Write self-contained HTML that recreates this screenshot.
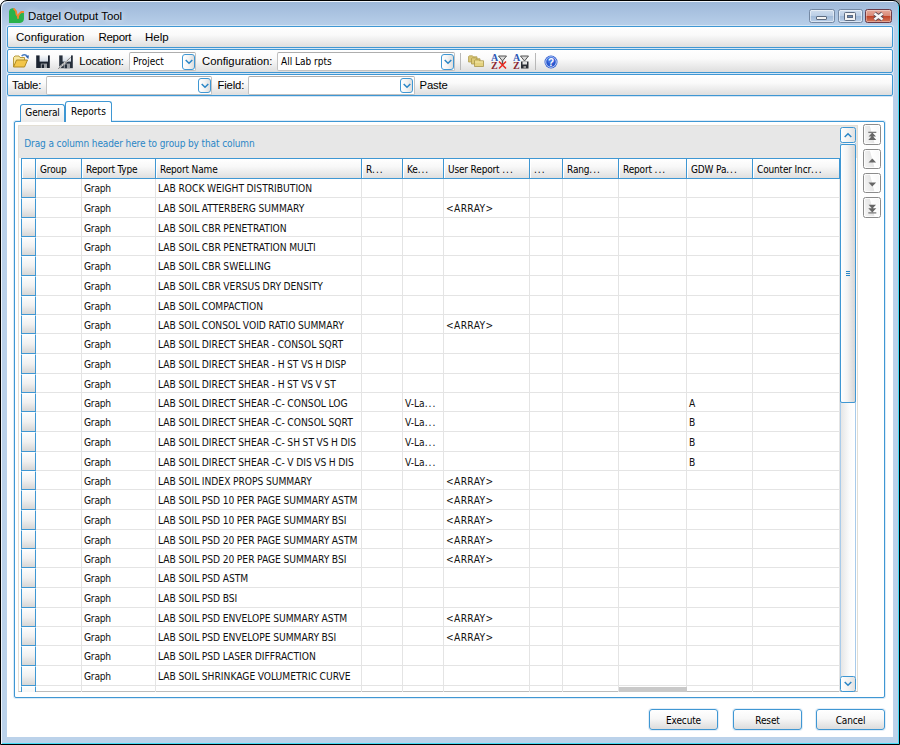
<!DOCTYPE html>
<html lang="en">
<head>
<meta charset="utf-8">
<title>Datgel Output Tool</title>
<style>
*{box-sizing:border-box;margin:0;padding:0}
html,body{width:900px;height:745px;overflow:hidden;background:#fff}
body{position:relative;font-family:"Liberation Sans",sans-serif;font-size:11.5px;color:#000}
i{font-style:normal;display:block;position:absolute}
.abs{position:absolute}
#win{position:absolute;left:0;top:0;width:900px;height:745px;border:1px solid #000;border-radius:7px 7px 0 0;
 background:linear-gradient(#9db8d9 0,#a6bfde 8px,#b9d0ea 26px,#bbd2ea 100%);
 box-shadow:inset 1px 1px 0 #eef4fb,inset -1px -1px 0 #46dcf6}
#client{position:absolute;left:7px;top:26px;width:886px;height:711px;background:#fff}
.title{position:absolute;left:28px;top:8px;height:16px;line-height:16px;font-size:11.4px;white-space:nowrap;
 text-shadow:0 0 7px rgba(255,255,255,.8),0 0 7px rgba(255,255,255,.6)}
/* caption buttons */
.cb{position:absolute;top:9px;height:14px;border:1px solid #7488a3;border-radius:2.5px;background:linear-gradient(#cfdded 0,#bccfe6 46%,#a2bbd9 54%,#b9cde6 100%);box-shadow:inset 0 0 0 1px rgba(255,255,255,.5)}
.cb.close{background:linear-gradient(#e6a99b 0,#d98b79 46%,#c2452a 54%,#d27a5e 100%);border-color:#6b3a48;box-shadow:inset 0 0 0 1px rgba(255,255,255,.35)}
/* bars */
.bar{position:absolute;left:7px;width:886px;border:1px solid #3f97d3;border-radius:2px;
 background:linear-gradient(#ffffff 0,#fafafa 40%,#dedede 100%);box-shadow:0 0 0 1px #d5e6f5}
.lbl{position:absolute;white-space:nowrap;height:16px;line-height:16px;font-size:11.3px;letter-spacing:-.15px}
.combo{position:absolute;height:19px;background:#fff;border:1px solid #c2c2c2;border-top-color:#aeaeae;border-radius:2px}
.combo span{position:absolute;left:3px;top:2px;font:10px/13px "DejaVu Sans Condensed","Liberation Sans",sans-serif;white-space:nowrap}
.dd{position:absolute;width:12.5px;height:16px;border:1px solid #3f97d3;border-radius:3px;background:linear-gradient(90deg,#fff 0,#f4f4f4 50%,#dedede 100%)}
.dd svg{position:absolute;left:2px;top:4px}
.sep{position:absolute;width:1px;background:#b8b8b8}
/* tabs */
.tab{position:absolute;border:1px solid #3f97d3;border-bottom:none;border-radius:3px 3px 0 0;background:linear-gradient(#fff,#ececec);
 font:10px/14px "DejaVu Sans Condensed","Liberation Sans",sans-serif;text-align:center;white-space:nowrap}
.tab.act{background:#fff}
#page{position:absolute;left:14px;top:121px;width:871px;height:577px;border:1px solid #3f97d3;border-radius:2px;background:#fff;box-shadow:0 0 0 1px #dcebf7}
/* grid */
#grid{position:absolute;left:18px;top:125px;width:840px;height:567px;background:#fff;border:1px solid #e2ded4;border-bottom-color:#bcbcbc;overflow:hidden}
#gp{position:absolute;left:19px;top:126px;width:838px;height:32px;background:#e7e7e7}
.gptxt{position:absolute;left:24.3px;top:137px;letter-spacing:-.11px;font:10px/14px "DejaVu Sans Condensed","Liberation Sans",sans-serif;color:#2a86c6;white-space:nowrap}
.hc{position:absolute;top:158px;height:21px;border-top:1px solid #3f97d3;border-bottom:1px solid #3f97d3;border-left:1px solid #3f97d3;background:linear-gradient(#ffffff 0,#f8f8f8 40%,#dfdfdf 100%);box-shadow:inset 1px 1px 0 #fff;font:10px/17px "DejaVu Sans Condensed","Liberation Sans",sans-serif;letter-spacing:-.15px;white-space:nowrap;overflow:hidden}
b.d{font-weight:normal;letter-spacing:1px}
.hc span{position:absolute;left:4px;top:2px}
#gb{position:absolute;left:0;top:0;width:900px;height:745px;clip-path:inset(179px 60px 53px 21px)}
.row{position:absolute;left:0;width:900px;border-bottom:1px solid #e4e4e4}
.row .c{position:absolute;top:4px;font:10.2px/14px "DejaVu Sans Condensed","Liberation Sans",sans-serif;word-spacing:-.4px;white-space:nowrap;color:#111}
.row .nm{width:202px;overflow:hidden}
.row .sel{left:21px;top:0;width:15px;height:calc(100% + 1px);background:linear-gradient(#fdfdfd 0,#f0f0f0 50%,#d6d6d6 100%);border-left:1px solid #3f97d3;border-right:1px solid #3f97d3;border-bottom:1px solid #3f97d3;border-top:1px solid #fff}
.vl{top:179px;width:1px;height:513px;background:#e4e4e4}
/* scroll */
.sbtn{position:absolute;left:840px;width:16px;height:16px;border:1px solid #3f97d3;border-radius:2.5px;background:linear-gradient(90deg,#fff,#f0f0f0 60%,#e0e0e0)}
.track{position:absolute;left:840px;top:143px;width:16px;height:534px;border-left:1px solid #a9cbea;border-right:1px solid #a9cbea;background:linear-gradient(90deg,#e6e6e6,#fbfbfb 60%,#fff)}
.thumb{position:absolute;left:840px;top:144px;width:16px;height:259px;border:1px solid #3f97d3;border-radius:2px;background:linear-gradient(90deg,#fff 0,#f3f3f3 45%,#d6d6d6 100%)}
.mv{position:absolute;left:863px;width:18px;height:21px;border:1px solid #8c8c8c;border-radius:2.5px;background:linear-gradient(75deg,#f8f8f8 0,#e6e6e6 49%,#ffffff 53%,#f7f7f7 100%);box-shadow:inset 0 0 0 1px rgba(255,255,255,.8)}
.mv svg{position:absolute;left:4px;top:4.6px}
/* buttons */
.btn{position:absolute;top:709px;width:69px;height:21px;border:1px solid #3f97d3;border-radius:3px;background:linear-gradient(#fff 0,#f7f7f7 45%,#dcdcdc 100%);
 font:10px/19px "DejaVu Sans Condensed","Liberation Sans",sans-serif;padding-top:1px;letter-spacing:-.15px;text-align:center;box-shadow:0 0 0 1px #e3eef8}
</style>
</head>
<body>
<i style="left:892px;top:0;width:8px;height:8px;background:#8f8f8f"></i>
<div id="win"></div>
<!-- title bar -->
<svg class="abs" style="left:9px;top:8px" width="16" height="16" viewBox="0 0 16 16">
 <path d="M0 3.2 Q0.3 0.6 3 0.3 L4.8 0.3 L7 3 L7.5 6.5 L9 9 L10.5 5.5 L12.5 4.2 L15 4.2 L15 11 Q14.6 14.6 11 15 L0 15 Z" fill="#2ab24a"/>
 <path d="M4.6 0.4 L6.9 3 L7.6 6.6 L9 8.6 L9 10.8 M9 8.4 L10.4 5.6 L12.4 4 L15 4" fill="none" stroke="#f5852c" stroke-width="1.8" stroke-linejoin="round"/>
</svg>
<div class="title">Datgel Output Tool</div>
<div class="cb" style="left:809px;width:26px"><i style="left:6px;top:6px;width:11px;height:4px;background:#f4f4f4;border:1px solid #5d6b80;border-radius:1px"></i></div>
<div class="cb" style="left:838px;width:25px"><i style="left:5px;top:2px;width:12px;height:9px;border:1px solid #5d6b80;border-radius:1.5px;background:#f4f4f4"></i><i style="left:8px;top:5px;width:6px;height:3px;border:1px solid #5d6b80;background:#6d8bb4"></i></div>
<div class="cb close" style="left:865px;width:27px"><svg class="abs" style="left:5px;top:1px" width="15" height="11" viewBox="0 0 15 11"><path d="M3.5 2.5 L11.5 8.5 M11.5 2.5 L3.5 8.5" stroke="#5a4a55" stroke-width="4.2" stroke-linecap="butt"/><path d="M3.5 2.5 L11.5 8.5 M11.5 2.5 L3.5 8.5" stroke="#f6f6f6" stroke-width="2.6" stroke-linecap="butt"/></svg></div>

<div id="client"></div>
<!-- menu bar -->
<div class="bar" style="top:26px;height:22px"></div>
<div class="lbl" style="left:16px;top:29px;font-size:11.5px;letter-spacing:0">Configuration</div>
<div class="lbl" style="left:98.5px;top:29px;font-size:11.5px;letter-spacing:-.3px">Report</div>
<div class="lbl" style="left:145px;top:29px;font-size:11.5px;letter-spacing:0">Help</div>
<!-- toolbar -->
<div class="bar" style="top:49px;height:24px"></div>
<!-- open icon -->
<svg class="abs" style="left:12px;top:53px" width="17" height="16" viewBox="0 0 17 16">
 <path d="M1.5 14 L1.5 4.5 L3 3 L7 3 L8 4.5 L12.5 4.5 L12.5 7" fill="#f7e7a0" stroke="#b89b3e" stroke-width="1"/>
 <path d="M1.5 14 L4.5 7 L15.5 7 L12.5 14 Z" fill="#f3c64a" stroke="#b08a22" stroke-width="1"/>
 <path d="M9.6 3 Q12.8 0.3 15.4 3.4" fill="none" stroke="#4a7fc4" stroke-width="1.5"/><path d="M13.6 3.6 L16.9 2.2 L16.4 5.9 Z" fill="#2f62ad"/>
</svg>
<!-- save icon -->
<svg class="abs" style="left:36px;top:54.5px" width="14" height="13.5" viewBox="0 0 14 13.5">
 <defs><linearGradient id="lg1" x1="0" y1="0" x2="0" y2="1"><stop offset="0" stop-color="#fbfcfd"/><stop offset="1" stop-color="#d3dbe6"/></linearGradient></defs>
 <path d="M0.2 0.4 H13.8 V13.2 H0.2 Z" fill="#1b2330"/>
 <rect x="3.6" y="0" width="8.4" height="6.6" fill="url(#lg1)"/>
 <rect x="4.8" y="8.6" width="6.2" height="4.6" fill="#9b9fa5"/><rect x="5.8" y="9.4" width="2.2" height="3.8" fill="#1b2330"/>
</svg>
<!-- save-as icon -->
<svg class="abs" style="left:57.5px;top:54.5px" width="15" height="14" viewBox="0 0 15 14">
 <path d="M1.2 0.4 H14.8 V13.2 H1.2 Z" fill="#27303c"/>
 <rect x="4.6" y="0" width="8.4" height="6.6" fill="url(#lg1)"/>
 <rect x="5.8" y="8.6" width="6.2" height="4.6" fill="#9b9fa5"/><rect x="6.8" y="9.4" width="2.2" height="3.8" fill="#27303c"/>
 <path d="M0.3 13.8 L12.5 2.6" stroke="#e6e6e6" stroke-width="1.8"/><path d="M0.3 13.8 L12.5 2.6" stroke="#4a4a4a" stroke-width=".8" stroke-dasharray="2.2 .8"/>
</svg>
<div class="lbl" style="left:79.3px;top:53px">Location:</div>
<div class="combo" style="left:129px;top:52px;width:67px"><span>Project</span></div>
<div class="dd" style="left:182px;top:53.5px"><svg width="8" height="6" viewBox="0 0 8 6"><path d="M0.7 1 L4 4.3 L7.3 1" fill="none" stroke="#2a86c6" stroke-width="1.5"/></svg></div>
<div class="lbl" style="left:202px;top:53px;letter-spacing:0">Configuration:</div>
<div class="combo" style="left:277px;top:52px;width:178px"><span>All Lab rpts</span></div>
<div class="dd" style="left:441px;top:53.5px"><svg width="8" height="6" viewBox="0 0 8 6"><path d="M0.7 1 L4 4.3 L7.3 1" fill="none" stroke="#2a86c6" stroke-width="1.5"/></svg></div>
<div class="sep" style="left:460px;top:53px;height:17px"></div>
<!-- folders icon -->
<svg class="abs" style="left:468px;top:54.5px" width="17" height="13" viewBox="0 0 17 13">
 <path d="M0.5 1.5 L1.5 0.8 L4.5 0.8 L5.5 1.8 L9 1.8 L9 7 L0.5 7 Z" fill="#d9c673" stroke="#b3a055" stroke-width=".8"/>
 <path d="M3.5 3.5 L4.5 2.8 L7.5 2.8 L8.5 3.8 L12 3.8 L12 9 L3.5 9 Z" fill="#decb78" stroke="#ab984c" stroke-width=".8"/>
 <path d="M6.5 5.5 L7.5 4.8 L10.5 4.8 L11.5 5.8 L15.5 5.8 L15.5 11.5 L6.5 11.5 Z" fill="#e4d280" stroke="#a8954a" stroke-width=".8"/>
 <path d="M7 7 L15 7" stroke="#f3e7a8" stroke-width="1"/>
</svg>
<!-- AZ X icon -->
<svg class="abs" style="left:491px;top:53px" width="17" height="16" viewBox="0 0 17 16">
 <text x="0" y="7.5" font-family="Liberation Serif,serif" font-weight="bold" font-size="10" fill="#2b57b5">A</text>
 <text x="0" y="15.5" font-family="Liberation Serif,serif" font-weight="bold" font-size="10" fill="#8a2431">Z</text>
 <path d="M7.5 3 L15.5 3 L11.5 8 Z" fill="#d9d9d9" stroke="#555" stroke-width="1"/>
 <path d="M11.5 8 L11.5 11" stroke="#555" stroke-width="1.4"/>
 <path d="M8 8.5 L15 15.5 M15 8.5 L8 15.5" stroke="#e8281e" stroke-width="1.5"/>
</svg>
<!-- AZ save icon -->
<svg class="abs" style="left:513px;top:53px" width="17" height="16" viewBox="0 0 17 16">
 <text x="0" y="7.5" font-family="Liberation Serif,serif" font-weight="bold" font-size="10" fill="#2b57b5">A</text>
 <text x="0" y="15.5" font-family="Liberation Serif,serif" font-weight="bold" font-size="10" fill="#8a2431">Z</text>
 <path d="M7.5 3 L15.5 3 L11.5 8 Z" fill="#d9d9d9" stroke="#555" stroke-width="1"/>
 <rect x="8" y="8.5" width="7.5" height="7" fill="#2c3037"/><rect x="9.5" y="8.5" width="4.5" height="3" fill="#e4e4e4"/><rect x="10.5" y="13" width="2.5" height="2.5" fill="#9a9a9a"/>
</svg>
<div class="sep" style="left:535px;top:53px;height:17px"></div>
<!-- help icon -->
<svg class="abs" style="left:543.5px;top:54.5px" width="14" height="14" viewBox="0 0 14 14">
 <circle cx="7" cy="7" r="6.5" fill="#2a59cf"/>
 <circle cx="7" cy="7" r="5.3" fill="none" stroke="#cfdcf8" stroke-width=".9"/>
 <circle cx="7" cy="5" r="3.6" fill="#5a86ec" opacity=".55"/>
 <text x="7" y="10.6" text-anchor="middle" font-family="Liberation Sans,sans-serif" font-weight="bold" font-size="10" fill="#fff">?</text>
</svg>
<!-- table bar -->
<div class="bar" style="top:74px;height:22px"></div>
<div class="lbl" style="left:12px;top:76.5px">Table:</div>
<div class="combo" style="left:46px;top:76px;width:166px;height:19px"></div>
<div class="dd" style="left:198px;top:78px;height:15px"><svg width="8" height="6" viewBox="0 0 8 6"><path d="M0.7 1 L4 4.3 L7.3 1" fill="none" stroke="#2a86c6" stroke-width="1.5"/></svg></div>
<div class="lbl" style="left:217.5px;top:76.5px">Field:</div>
<div class="combo" style="left:248px;top:76px;width:167px;height:19px"></div>
<div class="dd" style="left:400px;top:78px;height:15px"><svg width="8" height="6" viewBox="0 0 8 6"><path d="M0.7 1 L4 4.3 L7.3 1" fill="none" stroke="#2a86c6" stroke-width="1.5"/></svg></div>
<div class="lbl" style="left:419.5px;top:76.5px">Paste</div>

<!-- tabs -->
<div id="page"></div>
<div class="tab" style="left:20px;top:104px;width:45px;height:18px;padding-top:.5px;letter-spacing:-.17px">General</div>
<div class="tab act" style="left:65px;top:101px;width:47px;height:21px;padding-top:3px;letter-spacing:.05px">Reports</div>

<!-- grid -->
<div id="grid"></div>
<div id="gp"></div>
<div class="gptxt">Drag a column header here to group by that column</div>
<div id="gb">
<i class="vl" style="left:81px"></i>
<i class="vl" style="left:155px"></i>
<i class="vl" style="left:361px"></i>
<i class="vl" style="left:402px"></i>
<i class="vl" style="left:443px"></i>
<i class="vl" style="left:529px"></i>
<i class="vl" style="left:562px"></i>
<i class="vl" style="left:618px"></i>
<i class="vl" style="left:686px"></i>
<i class="vl" style="left:752px"></i>
<i class="vl" style="left:839px"></i>
<div class="row" style="top:178px;height:20px"><i class="sel"></i><span class="c" style="left:84px;letter-spacing:-.24px">Graph</span><span class="c nm" style="left:158px">LAB ROCK WEIGHT DISTRIBUTION</span></div>
<div class="row" style="top:198px;height:20px"><i class="sel"></i><span class="c" style="left:84px;letter-spacing:-.24px">Graph</span><span class="c nm" style="left:158px">LAB SOIL ATTERBERG SUMMARY</span><span class="c" style="left:446px;letter-spacing:.35px">&lt;ARRAY&gt;</span></div>
<div class="row" style="top:218px;height:19px"><i class="sel"></i><span class="c" style="left:84px;letter-spacing:-.24px">Graph</span><span class="c nm" style="left:158px">LAB SOIL CBR PENETRATION</span></div>
<div class="row" style="top:237px;height:19px"><i class="sel"></i><span class="c" style="left:84px;letter-spacing:-.24px">Graph</span><span class="c nm" style="left:158px">LAB SOIL CBR PENETRATION MULTI</span></div>
<div class="row" style="top:256px;height:20px"><i class="sel"></i><span class="c" style="left:84px;letter-spacing:-.24px">Graph</span><span class="c nm" style="left:158px">LAB SOIL CBR SWELLING</span></div>
<div class="row" style="top:276px;height:20px"><i class="sel"></i><span class="c" style="left:84px;letter-spacing:-.24px">Graph</span><span class="c nm" style="left:158px">LAB SOIL CBR VERSUS DRY DENSITY</span></div>
<div class="row" style="top:296px;height:19px"><i class="sel"></i><span class="c" style="left:84px;letter-spacing:-.24px">Graph</span><span class="c nm" style="left:158px">LAB SOIL COMPACTION</span></div>
<div class="row" style="top:315px;height:19px"><i class="sel"></i><span class="c" style="left:84px;letter-spacing:-.24px">Graph</span><span class="c nm" style="left:158px">LAB SOIL CONSOL VOID RATIO SUMMARY</span><span class="c" style="left:446px;letter-spacing:.35px">&lt;ARRAY&gt;</span></div>
<div class="row" style="top:334px;height:20px"><i class="sel"></i><span class="c" style="left:84px;letter-spacing:-.24px">Graph</span><span class="c nm" style="left:158px">LAB SOIL DIRECT SHEAR - CONSOL SQRT</span></div>
<div class="row" style="top:354px;height:20px"><i class="sel"></i><span class="c" style="left:84px;letter-spacing:-.24px">Graph</span><span class="c nm" style="left:158px">LAB SOIL DIRECT SHEAR - H ST VS H DISP</span></div>
<div class="row" style="top:374px;height:19px"><i class="sel"></i><span class="c" style="left:84px;letter-spacing:-.24px">Graph</span><span class="c nm" style="left:158px">LAB SOIL DIRECT SHEAR - H ST VS V ST</span></div>
<div class="row" style="top:393px;height:19px"><i class="sel"></i><span class="c" style="left:84px;letter-spacing:-.24px">Graph</span><span class="c nm" style="left:158px">LAB SOIL DIRECT SHEAR -C- CONSOL LOG</span><span class="c" style="left:405px">V-La<b class="d">...</b></span><span class="c" style="left:689px">A</span></div>
<div class="row" style="top:412px;height:20px"><i class="sel"></i><span class="c" style="left:84px;letter-spacing:-.24px">Graph</span><span class="c nm" style="left:158px">LAB SOIL DIRECT SHEAR -C- CONSOL SQRT</span><span class="c" style="left:405px">V-La<b class="d">...</b></span><span class="c" style="left:689px">B</span></div>
<div class="row" style="top:432px;height:20px"><i class="sel"></i><span class="c" style="left:84px;letter-spacing:-.24px">Graph</span><span class="c nm" style="left:158px">LAB SOIL DIRECT SHEAR -C- SH ST VS H DIS</span><span class="c" style="left:405px">V-La<b class="d">...</b></span><span class="c" style="left:689px">B</span></div>
<div class="row" style="top:452px;height:19px"><i class="sel"></i><span class="c" style="left:84px;letter-spacing:-.24px">Graph</span><span class="c nm" style="left:158px">LAB SOIL DIRECT SHEAR -C- V DIS VS H DIS</span><span class="c" style="left:405px">V-La<b class="d">...</b></span><span class="c" style="left:689px">B</span></div>
<div class="row" style="top:471px;height:19px"><i class="sel"></i><span class="c" style="left:84px;letter-spacing:-.24px">Graph</span><span class="c nm" style="left:158px">LAB SOIL INDEX PROPS SUMMARY</span><span class="c" style="left:446px;letter-spacing:.35px">&lt;ARRAY&gt;</span></div>
<div class="row" style="top:490px;height:20px"><i class="sel"></i><span class="c" style="left:84px;letter-spacing:-.24px">Graph</span><span class="c nm" style="left:158px">LAB SOIL PSD 10 PER PAGE SUMMARY ASTM</span><span class="c" style="left:446px;letter-spacing:.35px">&lt;ARRAY&gt;</span></div>
<div class="row" style="top:510px;height:20px"><i class="sel"></i><span class="c" style="left:84px;letter-spacing:-.24px">Graph</span><span class="c nm" style="left:158px">LAB SOIL PSD 10 PER PAGE SUMMARY BSI</span><span class="c" style="left:446px;letter-spacing:.35px">&lt;ARRAY&gt;</span></div>
<div class="row" style="top:530px;height:19px"><i class="sel"></i><span class="c" style="left:84px;letter-spacing:-.24px">Graph</span><span class="c nm" style="left:158px">LAB SOIL PSD 20 PER PAGE SUMMARY ASTM</span><span class="c" style="left:446px;letter-spacing:.35px">&lt;ARRAY&gt;</span></div>
<div class="row" style="top:549px;height:19px"><i class="sel"></i><span class="c" style="left:84px;letter-spacing:-.24px">Graph</span><span class="c nm" style="left:158px">LAB SOIL PSD 20 PER PAGE SUMMARY BSI</span><span class="c" style="left:446px;letter-spacing:.35px">&lt;ARRAY&gt;</span></div>
<div class="row" style="top:568px;height:20px"><i class="sel"></i><span class="c" style="left:84px;letter-spacing:-.24px">Graph</span><span class="c nm" style="left:158px">LAB SOIL PSD ASTM</span></div>
<div class="row" style="top:588px;height:20px"><i class="sel"></i><span class="c" style="left:84px;letter-spacing:-.24px">Graph</span><span class="c nm" style="left:158px">LAB SOIL PSD BSI</span></div>
<div class="row" style="top:608px;height:19px"><i class="sel"></i><span class="c" style="left:84px;letter-spacing:-.24px">Graph</span><span class="c nm" style="left:158px">LAB SOIL PSD ENVELOPE SUMMARY ASTM</span><span class="c" style="left:446px;letter-spacing:.35px">&lt;ARRAY&gt;</span></div>
<div class="row" style="top:627px;height:19px"><i class="sel"></i><span class="c" style="left:84px;letter-spacing:-.24px">Graph</span><span class="c nm" style="left:158px">LAB SOIL PSD ENVELOPE SUMMARY BSI</span><span class="c" style="left:446px;letter-spacing:.35px">&lt;ARRAY&gt;</span></div>
<div class="row" style="top:646px;height:20px"><i class="sel"></i><span class="c" style="left:84px;letter-spacing:-.24px">Graph</span><span class="c nm" style="left:158px">LAB SOIL PSD LASER DIFFRACTION</span></div>
<div class="row" style="top:666px;height:20px"><i class="sel"></i><span class="c" style="left:84px;letter-spacing:-.24px">Graph</span><span class="c nm" style="left:158px">LAB SOIL SHRINKAGE VOLUMETRIC CURVE</span></div>
<div class="row" style="top:686px;height:20px"><i class="sel"></i></div>
</div>
<div class="hc" style="left:21px;width:14px"><span></span></div>
<div class="hc" style="left:35px;width:46px"><span>Group</span></div>
<div class="hc" style="left:81px;width:74px"><span>Report Type</span></div>
<div class="hc" style="left:155px;width:206px"><span>Report Name</span></div>
<div class="hc" style="left:361px;width:41px"><span>R<b class="d">...</b></span></div>
<div class="hc" style="left:402px;width:41px"><span>Ke<b class="d">...</b></span></div>
<div class="hc" style="left:443px;width:86px"><span>User Report <b class="d">...</b></span></div>
<div class="hc" style="left:529px;width:33px"><span><b class="d">...</b></span></div>
<div class="hc" style="left:562px;width:56px"><span>Rang<b class="d">...</b></span></div>
<div class="hc" style="left:618px;width:68px"><span>Report <b class="d">...</b></span></div>
<div class="hc" style="left:686px;width:66px"><span>GDW Pa<b class="d">...</b></span></div>
<div class="hc" style="left:752px;width:87px"><span>Counter Incr<b class="d">...</b></span></div>
<i style="left:839px;top:158px;width:1px;height:21px;background:#3f97d3"></i>
<i style="left:619px;top:687px;width:68px;height:5px;background:#c9c9c9"></i>
<!-- vertical scrollbar -->
<div class="track"></div>
<div class="sbtn" style="top:127px"><svg class="abs" style="left:3px;top:4px" width="8" height="6" viewBox="0 0 8 6"><path d="M0.7 5 L4 1.7 L7.3 5" fill="none" stroke="#2a86c6" stroke-width="1.5"/></svg></div>
<div class="thumb"><i style="left:5px;top:126px;width:4px;height:1px;background:#2a86c6;box-shadow:0 2px 0 #2a86c6,0 4px 0 #2a86c6"></i></div>
<div class="sbtn" style="top:676px"><svg class="abs" style="left:3px;top:4px" width="8" height="6" viewBox="0 0 8 6"><path d="M0.7 1 L4 4.3 L7.3 1" fill="none" stroke="#2a86c6" stroke-width="1.5"/></svg></div>
<!-- move buttons -->
<div class="mv" style="top:124px"><svg width="9" height="11" viewBox="0 0 9 11"><path d="M0.3 2.3 H8.3" stroke="#666" stroke-width="1.1"/><path d="M4.3 2.4 L8 6.4 H0.6 Z M4.3 5.6 L8.3 10 H0.3 Z" fill="#666"/></svg></div>
<div class="mv" style="top:149px;height:20px"><svg width="9" height="11" viewBox="0 0 9 11"><path d="M4.3 3.4 L8.1 7.4 H0.5 Z" fill="#666"/></svg></div>
<div class="mv" style="top:173px;height:20px"><svg width="9" height="11" viewBox="0 0 9 11"><path d="M4.3 7.6 L8.1 3.6 H0.5 Z" fill="#666"/></svg></div>
<div class="mv" style="top:197px"><svg width="9" height="11" viewBox="0 0 9 11"><path d="M0.3 9.9 H8.3" stroke="#666" stroke-width="1.1"/><path d="M4.3 5.8 L8 1.8 H0.6 Z M4.3 9.6 L8.3 5.2 H0.3 Z" fill="#666"/></svg></div>

<!-- bottom buttons -->
<div class="btn" style="left:649px">Execute</div>
<div class="btn" style="left:733px">Reset</div>
<div class="btn" style="left:816px">Cancel</div>
</body>
</html>
